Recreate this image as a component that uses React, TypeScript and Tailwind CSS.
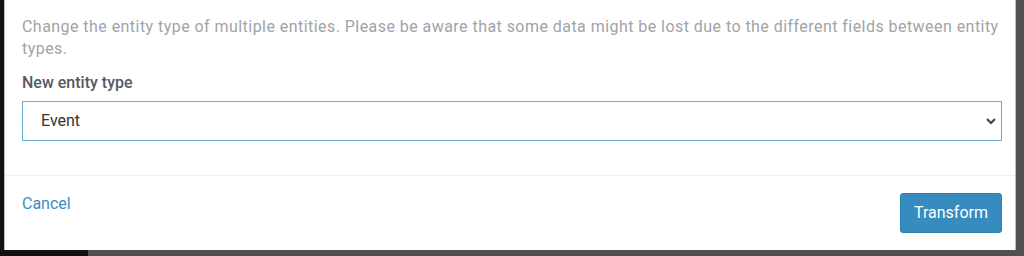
export default function App() {
  return (
    <div
      className="relative h-[256px] w-[1024px] overflow-hidden bg-[#505050]"
      style={{ fontFamily: "Roboto, 'Liberation Sans', sans-serif" }}
    >
      {/* dark sidebar peeking out behind the modal */}
      <div className="absolute left-0 top-0 h-full w-[88px] bg-[#111111]" />

      <div className="relative ml-[4px] mr-[8px] flex h-[250px] flex-col border-l border-r border-[#bdbdbd] bg-white">
        <div className="pl-[17px] pr-[13px] pt-[16px]">
          <p className="text-[16px] leading-[22px] tracking-[0.45px] text-[#a0a4a8]">
            Change the entity type of multiple entities. Please be aware that some data might be lost due to the
            different fields between entity types.
          </p>
          <label className="mt-[12px] block text-[16px] font-medium leading-[22px] text-[#555a5f]">
            New entity type
          </label>
          <div className="mt-[7px] flex h-[40px] items-center justify-between border border-[#6aaed6] pl-[18px] pr-[5px]">
            <span className="text-[16px] text-[#333]">Event</span>
            <svg width="10" height="7" viewBox="0 0 10 7">
              <polyline points="1,1 5,5 9,1" fill="none" stroke="#444" strokeWidth="2.2" />
            </svg>
          </div>
        </div>

        <div className="mt-[34px] border-t border-[#eeeeee]" />

        <div className="flex items-start justify-between pl-[17px] pr-[13px] pt-[17px]">
          <button className="text-[16px] leading-[22px] text-[#3a8dc0]">Cancel</button>
          <button className="h-[40px] w-[102px] rounded-[3px] border border-[#2f7fb0] bg-[#368cbf] text-[16px] text-white">
            Transform
          </button>
        </div>
      </div>
    </div>
  );
}
